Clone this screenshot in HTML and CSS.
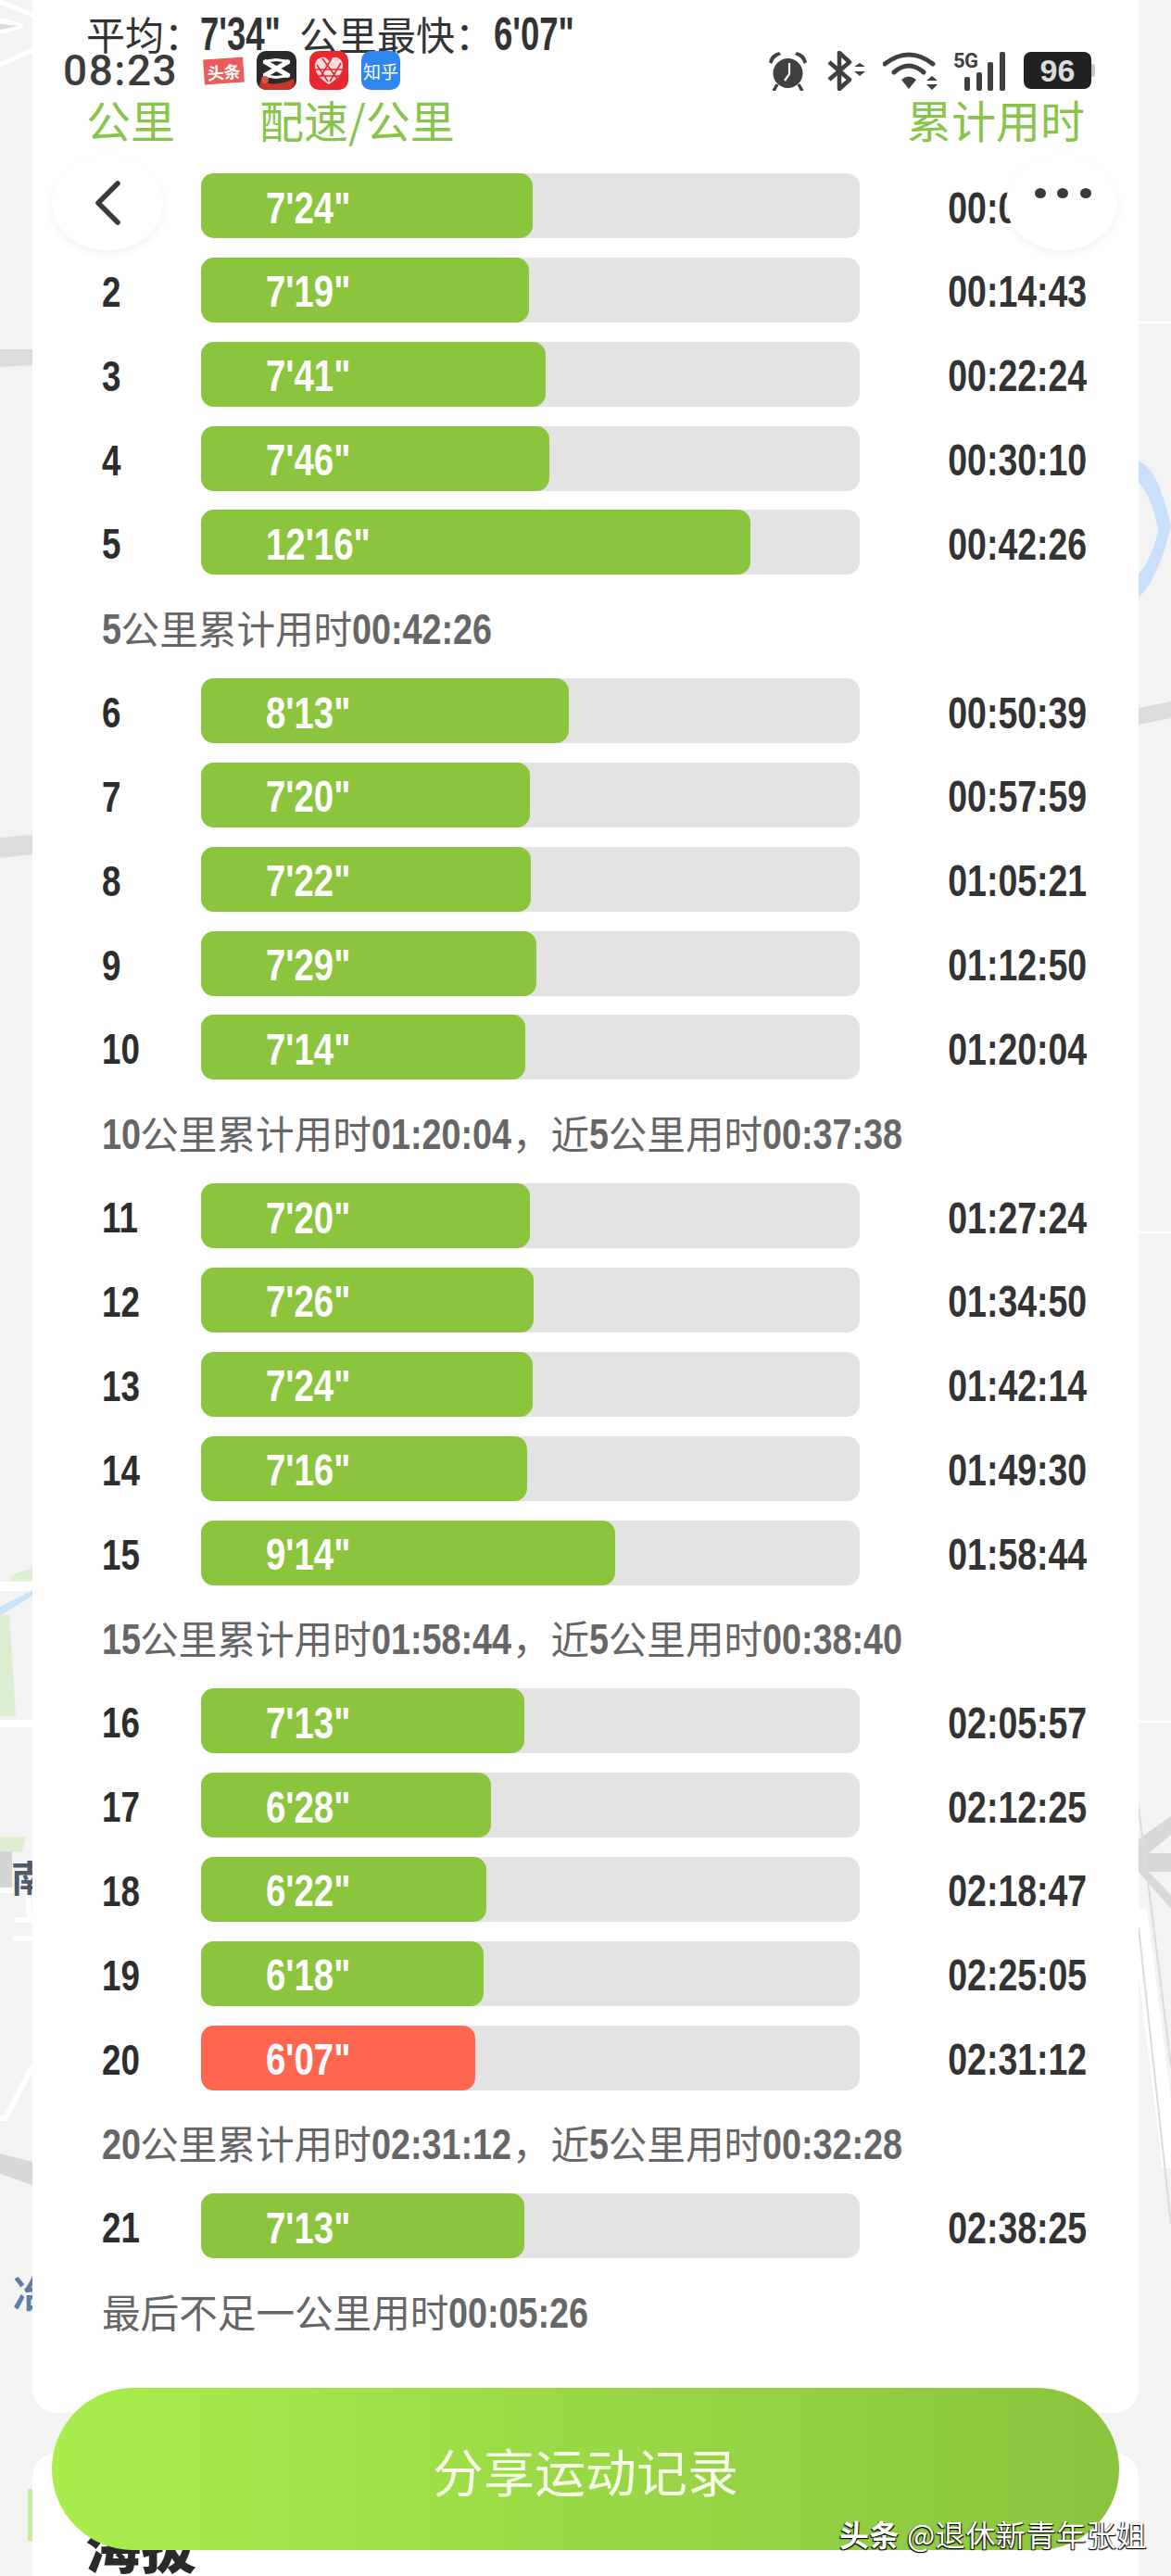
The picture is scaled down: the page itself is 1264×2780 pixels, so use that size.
FILE: index.html
```html
<!DOCTYPE html>
<html lang="zh-CN">
<head>
<meta charset="utf-8">
<title>运动记录</title>
<link rel="stylesheet" href="styles.css">
</head>
<body>
<div class="page">
  <svg class="map" width="1264" height="2780" viewBox="0 0 1264 2780" aria-hidden="true">
    <path d="M0 2L35 16M0 22L24 28L0 34M0 70L35 54" stroke="#fff" stroke-width="5" fill="none"/>
    <path d="M0 26L20 28L0 32Z" fill="#dcdcdc"/>
    <path d="M0 377L35 377L35 394L0 396Z" fill="#dcdcdc"/>
    <path d="M0 904L35 901L35 922L0 926Z" fill="#dcdcdc"/>
    <path d="M0 1712H35" stroke="#fff" stroke-width="10"/>
    <path d="M12 1700L35 1692V1706H12Z" fill="#dcefd0"/>
    <path d="M0 1734L35 1716V1722L0 1744Z" fill="#cbe3f8"/>
    <path d="M0 1744L10 1742L17 1852H0Z" fill="#dcefd0"/>
    <path d="M0 1860H35" stroke="#fff" stroke-width="8"/>
    <path d="M0 1982H28L24 1998H0Z" fill="#dcefd0"/>
    <rect x="0" y="1998" width="13" height="42" fill="#d4d4d4"/>
    <path d="M0 2040H30L32 2072H16M14 2092H35M35 2230L6 2286H0" stroke="#fff" stroke-width="6" fill="none"/>
    <path d="M0 2324L35 2333V2358L0 2346Z" fill="#d8d8d8"/>
    <path d="M30 2686H35V2742H30Z" fill="#c6eba2"/>
    <path d="M1229 498Q1250 505 1264 568Q1250 625 1229 645V620Q1245 600 1250 572Q1245 540 1229 520Z" fill="#c8e0fb"/>
    <path d="M1229 764L1264 757V775L1229 782Z" fill="#dcdcdc"/>
    <path d="M1229 348H1264M1229 1330H1264M1229 1858H1264" stroke="#fff" stroke-width="3"/>
    <path d="M1229 1985L1264 1960V1980L1240 2000H1264V2020H1240L1264 2045V2060L1229 2020Z" fill="#d8d8d8"/>
    <path d="M1229 2060L1264 2340" stroke="#fff" stroke-width="18"/>
    <path d="M1229 1950L1264 2230M1229 2080L1264 2400" stroke="#dcdcdc" stroke-width="2" fill="none"/>
    <text class="map-label" x="12" y="2042">南</text>
    <text class="map-label map-label-water" x="14" y="2490">冶</text>
  </svg>
  <main class="card">
    <div class="head"><span class="head-km">公里</span><span class="head-pace">配速/公里</span><span class="head-total">累计用时</span></div>
    <div class="row"><span class="num">1</span><div class="track"><div class="fill" style="width:358px"><span class="pace">7'24"</span></div></div><div class="time"><span>00:07:24</span></div></div>
    <div class="row"><span class="num">2</span><div class="track"><div class="fill" style="width:354px"><span class="pace">7'19"</span></div></div><div class="time"><span>00:14:43</span></div></div>
    <div class="row"><span class="num">3</span><div class="track"><div class="fill" style="width:372px"><span class="pace">7'41"</span></div></div><div class="time"><span>00:22:24</span></div></div>
    <div class="row"><span class="num">4</span><div class="track"><div class="fill" style="width:376px"><span class="pace">7'46"</span></div></div><div class="time"><span>00:30:10</span></div></div>
    <div class="row"><span class="num">5</span><div class="track"><div class="fill" style="width:593px"><span class="pace">12'16"</span></div></div><div class="time"><span>00:42:26</span></div></div>
    <div class="note"><b class="d1">5</b>公里累计用时<b class="d8">00:42:26</b></div>
    <div class="row"><span class="num">6</span><div class="track"><div class="fill" style="width:397px"><span class="pace">8'13"</span></div></div><div class="time"><span>00:50:39</span></div></div>
    <div class="row"><span class="num">7</span><div class="track"><div class="fill" style="width:355px"><span class="pace">7'20"</span></div></div><div class="time"><span>00:57:59</span></div></div>
    <div class="row"><span class="num">8</span><div class="track"><div class="fill" style="width:356px"><span class="pace">7'22"</span></div></div><div class="time"><span>01:05:21</span></div></div>
    <div class="row"><span class="num">9</span><div class="track"><div class="fill" style="width:362px"><span class="pace">7'29"</span></div></div><div class="time"><span>01:12:50</span></div></div>
    <div class="row"><span class="num">10</span><div class="track"><div class="fill" style="width:350px"><span class="pace">7'14"</span></div></div><div class="time"><span>01:20:04</span></div></div>
    <div class="note"><b class="d2">10</b>公里累计用时<b class="d8">01:20:04</b>，近<b class="d1">5</b>公里用时<b class="d8">00:37:38</b></div>
    <div class="row"><span class="num">11</span><div class="track"><div class="fill" style="width:355px"><span class="pace">7'20"</span></div></div><div class="time"><span>01:27:24</span></div></div>
    <div class="row"><span class="num">12</span><div class="track"><div class="fill" style="width:359px"><span class="pace">7'26"</span></div></div><div class="time"><span>01:34:50</span></div></div>
    <div class="row"><span class="num">13</span><div class="track"><div class="fill" style="width:358px"><span class="pace">7'24"</span></div></div><div class="time"><span>01:42:14</span></div></div>
    <div class="row"><span class="num">14</span><div class="track"><div class="fill" style="width:352px"><span class="pace">7'16"</span></div></div><div class="time"><span>01:49:30</span></div></div>
    <div class="row"><span class="num">15</span><div class="track"><div class="fill" style="width:447px"><span class="pace">9'14"</span></div></div><div class="time"><span>01:58:44</span></div></div>
    <div class="note"><b class="d2">15</b>公里累计用时<b class="d8">01:58:44</b>，近<b class="d1">5</b>公里用时<b class="d8">00:38:40</b></div>
    <div class="row"><span class="num">16</span><div class="track"><div class="fill" style="width:349px"><span class="pace">7'13"</span></div></div><div class="time"><span>02:05:57</span></div></div>
    <div class="row"><span class="num">17</span><div class="track"><div class="fill" style="width:313px"><span class="pace">6'28"</span></div></div><div class="time"><span>02:12:25</span></div></div>
    <div class="row"><span class="num">18</span><div class="track"><div class="fill" style="width:308px"><span class="pace">6'22"</span></div></div><div class="time"><span>02:18:47</span></div></div>
    <div class="row"><span class="num">19</span><div class="track"><div class="fill" style="width:305px"><span class="pace">6'18"</span></div></div><div class="time"><span>02:25:05</span></div></div>
    <div class="row"><span class="num">20</span><div class="track"><div class="fill fill-best" style="width:296px"><span class="pace">6'07"</span></div></div><div class="time"><span>02:31:12</span></div></div>
    <div class="note"><b class="d2">20</b>公里累计用时<b class="d8">02:31:12</b>，近<b class="d1">5</b>公里用时<b class="d8">00:32:28</b></div>
    <div class="row"><span class="num">21</span><div class="track"><div class="fill" style="width:349px"><span class="pace">7'13"</span></div></div><div class="time"><span>02:38:25</span></div></div>
    <div class="note">最后不足一公里用时<b class="d8">00:05:26</b></div>
  </main>
  <section class="card-next"><h2 class="next-title">海拔</h2></section>
</div>
<div class="summary">平均：<b>7'34"</b><span class="summary-fast">公里最快：</span><b>6'07"</b></div>
<div class="status">
  <span class="status-time">08:23</span>
  <div class="notif">
    <span class="app app-toutiao">头条</span>
    <svg class="app-icon" width="43" height="42" viewBox="0 0 43 42" aria-hidden="true">
      <rect width="43" height="42" rx="10" fill="#2a2a2a"/>
      <path d="M8 11L35 27M35 11L8 27" stroke="#fff" stroke-width="5" fill="none"/>
      <path d="M7 10L21 8L36 10V13L21 11L7 13ZM7 28L21 30L36 28V25L21 27L7 25Z" fill="#fff"/>
      <path d="M4 33Q22 39 40 30L41 36Q38 42 33 42H10Q5 42 3 37Z" fill="#c9352d"/>
      <circle cx="9" cy="31" r="4" fill="#d9584c"/>
    </svg>
    <svg class="app-icon" width="42" height="42" viewBox="0 0 42 42" aria-hidden="true">
      <rect width="42" height="42" rx="10" fill="#e8282e"/>
      <path d="M21 36C10 29 6 23 6 16C6 10 11 6 16 7C18 7.500 20 9 21 11C22 9 24 7.500 26 7C31 6 36 10 36 16C36 23 32 29 21 36Z" fill="#fbdcdc"/>
      <path d="M8 15L20 33M14 8L30 30M24 8L12 28M34 13L22 33M6 20H36M9 27H33" stroke="#e8282e" stroke-width="1.600" fill="none"/>
    </svg>
    <span class="app app-zhihu">知乎</span>
  </div>
  <div class="sys">
    <svg class="sys-alarm" width="43" height="43" viewBox="0 0 43 43" aria-hidden="true">
      <circle cx="21.500" cy="24" r="16" fill="#404040"/>
      <path d="M1 12Q3 3 12 1L14 4Q7 6 4 14ZM42 12Q40 3 31 1L29 4Q36 6 39 14Z" fill="#404040"/>
      <path d="M10 36L6 43M33 36L37 43" stroke="#404040" stroke-width="3.500"/>
      <path d="M23 13V25L18 32" stroke="#fff" stroke-width="2.200" fill="none"/>
    </svg>
    <svg class="sys-bt" width="42" height="43" viewBox="0 0 42 43" aria-hidden="true">
      <path d="M2 12L24 31L13 41V2L24 12L2 31" fill="none" stroke="#404040" stroke-width="4.500" stroke-linejoin="round"/>
      <path d="M30 17L36 13L42 17ZM30 22L36 27L42 22Z" fill="#404040" transform="translate(-1 0)"/>
    </svg>
    <svg class="sys-wifi" width="59" height="43" viewBox="0 0 59 43" aria-hidden="true">
      <path d="M2 14Q28 -6 54 14M12 23Q28 9 44 23" fill="none" stroke="#404040" stroke-width="5" stroke-linecap="round"/>
      <path d="M20 31Q28 24 36 31L28 41Z" fill="#404040"/>
      <path d="M47 32L53 27L59 32ZM47 36L53 42L59 36Z" fill="#404040"/>
    </svg>
    <div class="sys-signal">
      <span class="sig-5g">5G</span>
      <i class="b1"></i><i class="b2"></i><i class="b3"></i><i class="b4"></i>
    </div>
    <div class="battery"><span class="battery-level">96</span></div>
  </div>
</div>
<button class="float float-back" type="button" aria-label="返回"><svg width="30" height="50" viewBox="0 0 30 50"><path d="M26 4L5 25L26 46" fill="none" stroke="#3a3a3a" stroke-width="5.500" stroke-linecap="round" stroke-linejoin="round"/></svg></button>
<button class="float float-more" type="button" aria-label="更多"><i></i><i></i><i></i></button>
<button class="share" type="button">分享运动记录</button>
<div class="watermark"><b>头条</b> @退休新青年张姐</div>
</body>
</html>
```
FILE: styles.css
```css
html,body{margin:0;padding:0}
body{width:1264px;height:2780px;overflow:hidden;background:#f3f3f3;font-family:"Noto Sans CJK SC","Noto Sans",sans-serif;position:relative}
.page{position:relative;height:2780px;overflow:hidden}
.map{position:absolute;left:0;top:0}
.map-label{font:700 40px "Noto Sans CJK SC",sans-serif;fill:#4f5a6b;stroke:#fff;stroke-width:1px;paint-order:stroke}
.map-label-water{fill:#5f7ba8}
.card{position:relative;margin:0 35px;width:1194px;box-sizing:border-box;background:#fff;border-radius:0 0 26px 26px;padding:0 0 0 75px;height:2604px}
.head{height:187px;margin-left:-17px;box-sizing:border-box;padding-top:95px;display:flex;font-size:48px;line-height:66px;color:#88c34b;white-space:nowrap}
.head-km{width:187px}
.head-pace{width:699px}
.head-total{width:192px}
.row,.note{height:70px;margin-bottom:20.85px;display:flex;align-items:center}
.num{display:block;width:107px;font:700 46px "Liberation Sans",sans-serif;color:#2d2d2d;transform:scaleX(.8);transform-origin:left center;padding-top:4px}
.track{width:711px;height:70px;background:#e3e3e3;border-radius:14px}
.fill{height:70px;background:#8ac53d;border-radius:14px;display:flex;align-items:center;box-sizing:border-box;padding-left:70px}
.fill-best{background:#ff6650}
.pace{display:block;font:700 48px "Liberation Sans",sans-serif;color:#fff;transform:scaleX(.8);transform-origin:left center;padding-top:4px;white-space:nowrap}
.time{width:245.500px;text-align:right;color:#333;padding-top:4px}
.time span{display:inline-block;font:700 48px "Liberation Sans",sans-serif;transform:scaleX(.78);transform-origin:right center}
.note{display:block;box-sizing:border-box;padding-top:6px;font-size:41.600px;line-height:60px;color:#666;white-space:nowrap}
.note b{display:inline-block;font:700 46px/60px "Liberation Sans",sans-serif;transform:scaleX(.82);transform-origin:left center}
.d1{margin-right:-5px}
.d2{margin-right:-10px}
.d8{margin-right:-32px}
.card-next{position:relative;margin:43px 35px 0;height:200px;background:#fff;border-radius:26px 26px 0 0}
.next-title{margin:0;position:absolute;left:57px;top:55px;font-size:60px;font-weight:900;color:#2a2a2a}
.summary{position:absolute;left:93px;top:6px;font-size:42px;line-height:60px;color:#333;white-space:nowrap}
.summary b{display:inline-block;font:700 50px/60px "Liberation Sans",sans-serif;transform:scaleX(.73);transform-origin:left center;margin:0 -36px 0 -3px}
.summary-fast{margin:0 3px 0 24px}
.status{position:absolute;left:68px;top:54px;width:1110px;height:44px;display:flex;align-items:center}
.status-time{width:152px;font:500 46px/44px Roboto,sans-serif;letter-spacing:1.500px;color:#3c3c3c}
.notif{display:flex;align-items:center;gap:14px}
.app{display:flex;align-items:center;justify-content:center;color:#fff;font-weight:700;white-space:nowrap}
.app-toutiao{width:43px;height:27px;background:#ec5c5c;font-size:18px;transform:rotate(-4deg)}
.app-zhihu{width:42px;height:42px;border-radius:10px;background:#2e86ee;font-size:19px;font-weight:400}
.sys{margin-left:auto;display:flex;align-items:center}
.sys-alarm{margin-right:21px}
.sys-bt{margin-right:18px}
.sys-wifi{margin-right:17px}
.sys-signal{position:relative;width:56px;height:43px;margin-right:20px;display:flex;align-items:flex-end;justify-content:flex-end;gap:6.600px}
.sig-5g{position:absolute;left:0;top:-1px;font:700 22px/24px Roboto,sans-serif;color:#404040;letter-spacing:-.5px}
.sys-signal i{width:6px;background:#404040;border-radius:2px}
.b1{height:15px}
.b2{height:20px}
.b3{height:31px}
.b4{height:42px}
.battery{position:relative;width:73px;height:40px;background:#222;border-radius:8px;display:flex;align-items:center;justify-content:center}
.battery::after{content:"";position:absolute;left:73px;top:13px;width:4px;height:14px;background:#c4c4c4;border-radius:0 3px 3px 0}
.battery-level{font:700 34px/40px "Liberation Sans",sans-serif;color:#dcdcdc}
.float{position:absolute;top:168px;width:120px;height:102px;border:0;border-radius:50%;background:#fff;box-shadow:0 4px 10px rgba(0,0,0,.05);padding:0;display:flex;align-items:center;justify-content:center}
.float-back{left:56px}
.float-more{left:1086px;gap:12.500px;padding:0 0 22px 2px}
.float-more i{width:12px;height:11px;border-radius:50%;background:#3a3a3a}
.share{position:absolute;left:56px;top:2577px;width:1152px;height:175px;border:0;border-radius:88px;background:linear-gradient(90deg,#a9ed4d,#8ac43e);color:#f5fbe6;font:400 55px "Noto Sans CJK SC",sans-serif}
.watermark{position:absolute;left:906px;top:2712px;font-size:32px;line-height:44px;letter-spacing:.6px;color:#fff;text-shadow:1px 1px 1px #000,-1px 1px 1px #000;white-space:nowrap}
```
